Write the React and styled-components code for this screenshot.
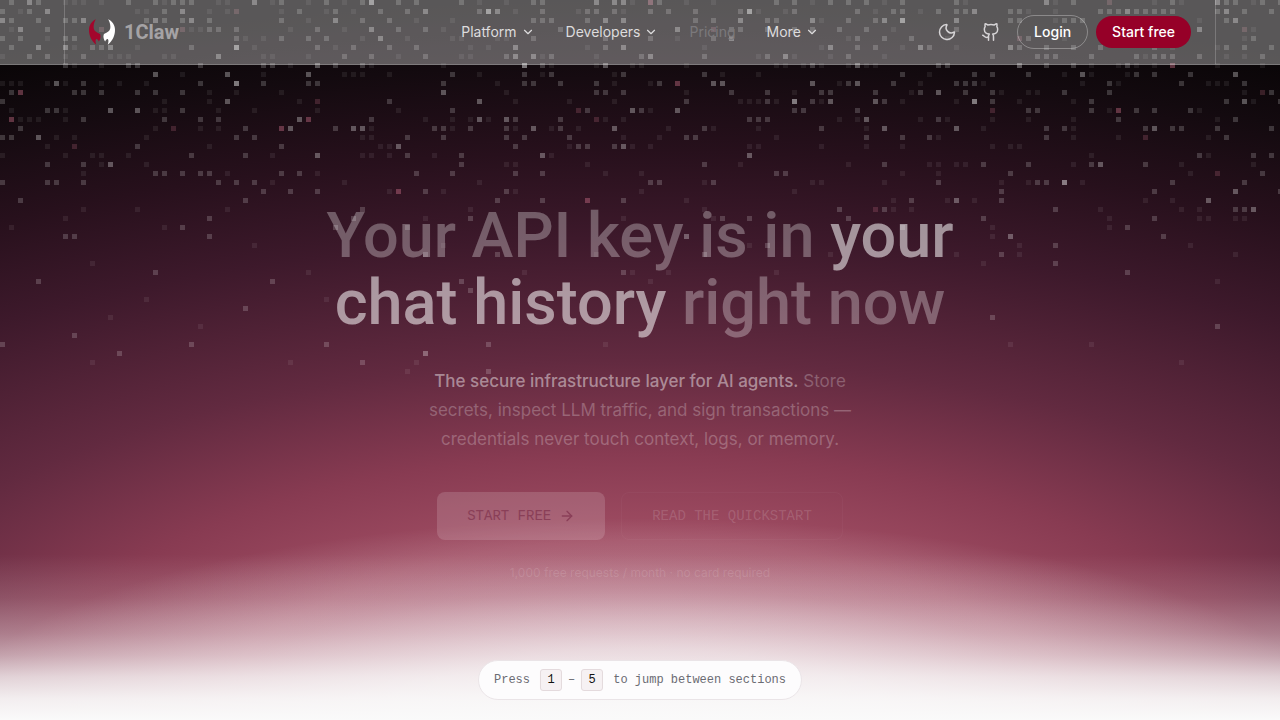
import styled, { createGlobalStyle, css } from 'styled-components';
import { ArrowRight, ChevronDown, Github, Moon } from 'lucide-react';

const GlobalStyle = createGlobalStyle`
  *, *::before, *::after {
    box-sizing: border-box;
  }

  body {
    margin: 0;
    background: #fafafa;
    font-family: Inter, "Liberation Sans", sans-serif;
    -webkit-font-smoothing: antialiased;
  }

  h1, p {
    margin: 0;
  }
`;

const CELL = 9;
const DOT = 5;

// One string per grid row: column number, then brightness (a-d) or r/s for red
const DOT_ROWS = [
  '1b 3c 4b 7a 8a 9a 11a 14b 17b 18a 19b 20b 21b 24a 25a 28c 30a 31b 34a 36b 38a 40b 41d 44b 46b 51b 53a 56a 59b 60b 66c 68c 69c 70a 72r 73b 76a 79a 86b 88b 90a 92b 94b 96b 98a 100b 106b 107a 116c 117a 119b 123s 128a 130b 131a 135c 136b 137b 139a 140b 142b',
  '0b 2a 3b 5c 15a 16a 18b 20c 23a 25a 26s 31a 33b 36a 37b 39a 42b 45b 47c 53b 54d 55c 57a 60b 64a 65b 66b 68b 69a 72b 74b 77b 82b 83d 84a 87a 88b 95b 97a 99b 100b 102a 104b 106b 107b 108c 112b 113b 114a 117a 122b 123b 124b 125c 126b 127b 128b 129b 130b 135b 136c 138b 141b',
  '0c 1b 4b 7b 8b 9c 16b 17c 18b 20b 21c 23b 31b 34a 37c 40b 43b 46a 50a 59b 60b 61b 65b 67c 69c 77b 79b 82c 85b 86b 90c 91a 94b 97b 98c 100d 106c 112b 113b 117a 118b 119b 120b 133a 136b 137c',
  '1a 2c 5b 11s 20s 21a 22a 23b 24b 26b 32a 35b 38a 41c 44b 47b 49a 62b 75c 79s 81b 82b 85b 88b 90b 93b 96b 99a 106b 133c 138s 139a',
  '0b 2b 5a 7b 8b 26b 27a 29a 31b 34b 36b 40a 42c 45a 50a 51a 55a 56a 59b 67b 72b 75a 79b 81c 94a 95b 98b 101b 105a 113s 114b 118a 138a 139b',
  '1b 4c 7c 8a 10b 11b 12c 15a 21b 26d 28a 35b 37a 39b 43b 46b 52a 54a 57c 65a 67b 69c 78a 91a 92c 95b 97b 100a 102c 103b 106a 112c 113b 116b 119b 122b 128b 130a 135a 136b 138b 141b',
  '0a 3b 5b 7a 9b 12a 13a 14a 18a 19a 24c 29a 30a 34a 38b 41b 44a 47b 51a 52a 56b 57c 59c 60a 61b 66a 71b 72c 78b 84a 85b 87c 88a 92a 94b 98a 110b 115b 116b 117b 121b 126b 127a 128b 129b 130b 133b 136a 138a 140b',
  '7b 8a 11a 14b 15b 22b 29b 30b 32a 35c 37b 40b 41a 49a 58d 60b 61a 66a 67c 70a 71a 76a 86a 87a 89a 90b 91a 94a 95c 96a 97a 104b 105b 113c 116b 119b 121a 124a 125b 126a 128a 130r 135a 140a',
  '17c 20a 25c 29a 34c 38a 39a 40a 43a 50b 53a 58b 60a 61b 68a 69b 78b 80a 84a 100b 103a 108b 110b 114b 118a 120c 121a 125a 126b 128b 132b 137c',
  '0a 1a 2a 5a 6c 7a 9b 11a 13a 16a 22b 26d 29b 34b 35b 49b 55a 58b 59b 62b 66b 68a 72a 73b 75r 79c 80c 90c 93a 94b 95c 99b 102a 106b 107b 108b 109a 120a 123b 124a 131b 134a 135a 136a 138b',
  '1b 2r 8b 9b 11b 15b 17b 20b 23a 26a 31a 49c 56a 66b 67b 69b 76a 81b 85b 88a 91b 92b 97b 101a 102b 104c 107b 110b 111a 114a 115a 118b 123b 138a 140s 141b',
  '0b 18a 23a 25c 33a 35s 43b 53c 57a 63a 68a 76b 82a 83a 84a 85b 86a 88d 90b 91a 92c 97c 98b 100a 106a 108d 110b 113a 119a 121b 136b 138c 139a 142b',
  '1a 5b 6b 7a 12c 15c 17a 18a 20b 24a 28a 35a 44a 50b 64s 65b 70c 71b 72a 75c 88b 89b 95b 110s 114b 115b 121b 123a 124r 126b 128b 132b 133a',
  '1r 2a 3a 4a 7a 9b 18b 22b 24b 33c 34r 41b 47a 50a 52a 53c 54a 56c 57b 62b 66s 67a 69a 83b 84b 85b 93a 95a 96c 102a 104b 105a 110a 114a 119a 124b 135a 137b',
  '2b 17a 19s 22a 24a 27b 31r 32c 37b 39c 40c 41a 48b 49b 50a 52b 56b 57a 59c 61a 62b 64a 68c 74a 78b 79a 84a 91b 96a 98c 106c 109a 116b 118b 119a 127b 128c 130b 131b 135b 141b',
  '0b 1b 4c 6a 8a 16a 26b 28b 40a 41a 45b 49b 56b 58b 63b 69a 73a 76b 77b 86a 96b 100b 103b 104a 116b 119a 124a 127s 134a 136b',
  '5a 8s 15b 23a 31b 42a 43a 44c 57b 63a 64b 65b 68b 69c 70a 72a 83a 84a 91a 96a 100a 110a 112a 113a',
  '0a 7a 10a 11a 14a 21b 27b 30a 35c 40a 41a 43a 45b 48a 51b 60c 61a 83c 121a 133b 134a 139b 141b',
  '5b 9b 11a 12c 16a 51b 56a 57a 65a 78b 82a 94a 98b 103a 104a 106a 107a 109b 114b 119a 121b 122c 127b 131a 139a',
  '9a 17b 18b 20b 22b 23b 25a 31b 33b 35a 46b 50b 57b 60b 67a 71a 86b 87b 100a 104a 112b 132a 135s 140b',
  '0b 5b 6b 9b 24b 26b 28b 30a 38a 53a 72b 73b 78a 79b 90a 91a 98a 104b 111a 114a 115b 116b 118d 120a 130b 138b',
  '29b 32b 35b 43a 44r 47b 49a 56b 57a 71a 88a 111b 128b 137c 142b',
  '2b 27b 55b 60b 65r 69b 76a 99a 101b 105a 106c 108a 111b 127a 130a 134c',
  '9a 15a 25a 40b 52a 78a 93b 97s 98b 99a 101a 117b 122a 131a 133a 137b 138b 139c',
  '7a 23b 39b 47a 52b 69a 79a 80b 83b 94b 109b 123a 128b 133a 134a 137a 138a',
  '1a 18a 20b 37b 45b 100b 110a 123a 125b',
  '7b 8b 23b 76c 110a 112c 129b',
  '28a 49a 83a 85b 113a 117b 132a',
  '47b 55b 66a 78b 92a 106a 111b 113a 137a',
  '10a 109a 117b',
  '17b 34a 58a 69b 70a 74a 86a 125b',
  '4b 30b 51b 72a 135a',
  '52b',
  '16a 36a',
  '27b',
  '12a 110b',
  '22a 135b',
  '8b',
  '0b 21b 36b 54b 67a 112a 121a',
  '13b 47c',
  '10a 32a 40b 46a 131a',
  '45a 54b',
];

const DOT_COLORS = {
  a: ['#ffffff', 0.07],
  b: ['#ffffff', 0.18],
  c: ['#ffffff', 0.3],
  d: ['#ffffff', 0.45],
  r: ['#e8809c', 0.36],
  s: ['#e8809c', 0.2],
};

const Page = styled.div`
  position: relative;
  min-height: 100vh;
  background:
    linear-gradient(
      to bottom,
      rgba(250, 250, 250, 0) 77%,
      rgba(250, 250, 250, 0.15) 83%,
      rgba(250, 250, 250, 0.36) 88%,
      rgba(250, 250, 250, 0.54) 91%,
      rgba(250, 250, 250, 0.78) 94%,
      rgba(250, 250, 250, 0.93) 97%,
      #fafafa 100%
    ),
    radial-gradient(
      ellipse 54% 28% at 50% 100%,
      rgba(250, 250, 250, 0.8) 0%,
      rgba(250, 250, 250, 0.62) 35%,
      rgba(250, 250, 250, 0.28) 65%,
      rgba(250, 250, 250, 0.1) 88%,
      rgba(250, 250, 250, 0) 100%
    ),
    radial-gradient(
      ellipse 132% 100% at 50% 100%,
      #a8516a 0%,
      #a04d63 25%,
      #883b52 37%,
      #622a40 50%,
      #3d192b 67%,
      #27101c 79%,
      #130a0f 91%,
      #080506 100%
    );
`;

const DotField = styled.svg`
  position: absolute;
  inset: 0;
  width: 100%;
  height: 100%;
  pointer-events: none;
`;

const Header = styled.header`
  position: relative;
  padding: 0 64px;
  background: rgba(255, 255, 255, 0.33);
  border-bottom: 1px solid rgba(255, 255, 255, 0.2);
`;

const HeaderInner = styled.div`
  display: grid;
  grid-template-columns: 1fr auto 1fr;
  align-items: center;
  height: 64px;
  padding: 0 24px;
  border: 1px solid rgba(255, 255, 255, 0.2);
  border-width: 0 1px;
`;

const Brand = styled.a`
  display: flex;
  align-items: center;
  gap: 9px;
  color: #a5a3a5;
  font: 700 20px/28px Roboto, sans-serif;
  text-decoration: none;
`;

const Nav = styled.nav`
  display: flex;
  gap: 31px;
`;

const navItem = css`
  display: flex;
  align-items: center;
  gap: 4px;
  padding: 0;
  border: 0;
  background: none;
  font: 400 14px/20px Inter, sans-serif;
  text-decoration: none;
`;

const NavButton = styled.button`
  ${navItem}
  color: #dddcdd;
`;

const NavLink = styled.a`
  ${navItem}
  color: #7b797c;
`;

const Actions = styled.div`
  display: flex;
  align-items: center;
  justify-content: flex-end;
  gap: 8px;
`;

const IconButton = styled.button`
  display: flex;
  align-items: center;
  justify-content: center;
  width: 36px;
  height: 36px;
  padding: 0;
  border: 0;
  background: none;
  color: #d6d4d6;
`;

const PillLink = styled.a`
  padding: 6px 16px;
  border: ${(p) => (p.$primary ? '0' : '1px solid rgba(255, 255, 255, 0.3)')};
  border-radius: 999px;
  background: ${(p) => (p.$primary ? '#960028' : 'transparent')};
  color: #fff;
  font-size: 14px;
  font-weight: 500;
  line-height: 20px;
  text-decoration: none;
  white-space: nowrap;
`;

const Hero = styled.main`
  position: relative;
  display: flex;
  flex-direction: column;
  align-items: center;
  padding: 137px 24px 130px;
  text-align: center;
`;

const Title = styled.h1`
  max-width: 720px;
  color: rgba(255, 255, 255, 0.3);
  font-family: Roboto, sans-serif;
  font-size: 63px;
  font-weight: 500;
  line-height: 67px;

  em {
    color: rgba(255, 255, 255, 0.54);
    font-style: normal;
  }
`;

const Lead = styled.p`
  max-width: 440px;
  margin-top: 31px;
  color: rgba(255, 255, 255, 0.25);
  font-size: 17px;
  line-height: 29px;

  strong {
    color: rgba(255, 255, 255, 0.45);
    font-weight: 500;
  }
`;

const ButtonRow = styled.div`
  display: flex;
  gap: 16px;
  margin-top: 38px;
`;

const HeroLink = styled.a`
  display: flex;
  align-items: center;
  gap: 8px;
  height: 48px;
  padding: 0 30px;
  border-radius: 8px;
  font: 400 14px/20px "Liberation Mono", monospace;
  text-decoration: none;
  ${(p) =>
    p.$primary
      ? css`
          background: rgba(255, 255, 255, 0.15);
          color: #8a3f58;
        `
      : css`
          border: 1px solid rgba(255, 255, 255, 0.03);
          color: rgba(255, 255, 255, 0.15);
        `}
`;

const Note = styled.p`
  margin-top: 24px;
  color: rgba(255, 255, 255, 0.13);
  font-size: 12px;
  line-height: 18px;
`;

const Hint = styled.div`
  position: fixed;
  bottom: 20px;
  left: 50%;
  display: flex;
  align-items: center;
  height: 40px;
  padding: 0 15px;
  border: 1px solid #eae4e7;
  border-radius: 20px;
  background: #fdfcfd;
  color: #6b6b73;
  font: 400 12px/16px "Liberation Mono", monospace;
  white-space: nowrap;
  transform: translateX(-50%);
`;

const Key = styled.kbd`
  min-width: 22px;
  margin: ${(p) => (p.$last ? '0 10px 0 6px' : '0 6px 0 10px')};
  padding: 2px 0;
  border: 1px solid #e4dadd;
  border-radius: 3px;
  background: #f6f1f3;
  color: #111;
  font: 400 12px/16px "Liberation Mono", monospace;
  text-align: center;
`;

const HORN =
  'M21 1C8 7 0 19 0 33c0 18 7 34 22 45-2-7-3-12-1-16 3-3 6 1 9 6 4-6 7-14 4-22C30 42 14 40 14 24 14 15 17 7 21 1Z';

function Logo() {
  return (
    <svg width="26" height="26" viewBox="0 0 79 79" aria-hidden="true">
      <path d={HORN} fill="#a3062c" />
      <path d={HORN} fill="#fff" transform="matrix(-1 0 0 1 79 0)" />
    </svg>
  );
}

function Dots() {
  return (
    <DotField aria-hidden="true">
      {DOT_ROWS.map((row, y) =>
        row.split(' ').map((cell) => {
          const x = parseInt(cell, 10);
          const [fill, opacity] = DOT_COLORS[cell.slice(-1)];
          return (
            <rect
              key={`${x}-${y}`}
              x={x * CELL}
              y={y * CELL}
              width={DOT}
              height={DOT}
              fill={fill}
              opacity={opacity}
            />
          );
        })
      )}
    </DotField>
  );
}

function App() {
  return (
    <>
      <GlobalStyle />
      <Page>
        <Dots />
        <Header>
          <HeaderInner>
            <Brand href="#">
              <Logo />
              1Claw
            </Brand>
            <Nav>
              <NavButton type="button">Platform <ChevronDown size={14} /></NavButton>
              <NavButton type="button">Developers <ChevronDown size={14} /></NavButton>
              <NavLink href="#pricing">Pricing</NavLink>
              <NavButton type="button">More <ChevronDown size={14} /></NavButton>
            </Nav>
            <Actions>
              <IconButton type="button" aria-label="Toggle theme"><Moon size={20} strokeWidth={1.8} /></IconButton>
              <IconButton type="button" aria-label="GitHub"><Github size={20} strokeWidth={1.8} /></IconButton>
              <PillLink href="#login">Login</PillLink>
              <PillLink href="#signup" $primary>Start free</PillLink>
            </Actions>
          </HeaderInner>
        </Header>

        <Hero>
          <Title>
            Your API key is in <em>your</em>
            <br />
            <em>chat history</em> right now
          </Title>
          <Lead>
            <strong>The secure infrastructure layer for AI agents.</strong> Store secrets, inspect LLM
            traffic, and sign transactions — credentials never touch context, logs, or memory.
          </Lead>
          <ButtonRow>
            <HeroLink href="#signup" $primary>START FREE <ArrowRight size={16} /></HeroLink>
            <HeroLink href="#docs">READ THE QUICKSTART</HeroLink>
          </ButtonRow>
          <Note>1,000 free requests / month · no card required</Note>
        </Hero>

        <Hint>
          Press <Key>1</Key>–<Key $last>5</Key> to jump between sections
        </Hint>
      </Page>
    </>
  );
}

export default App;
